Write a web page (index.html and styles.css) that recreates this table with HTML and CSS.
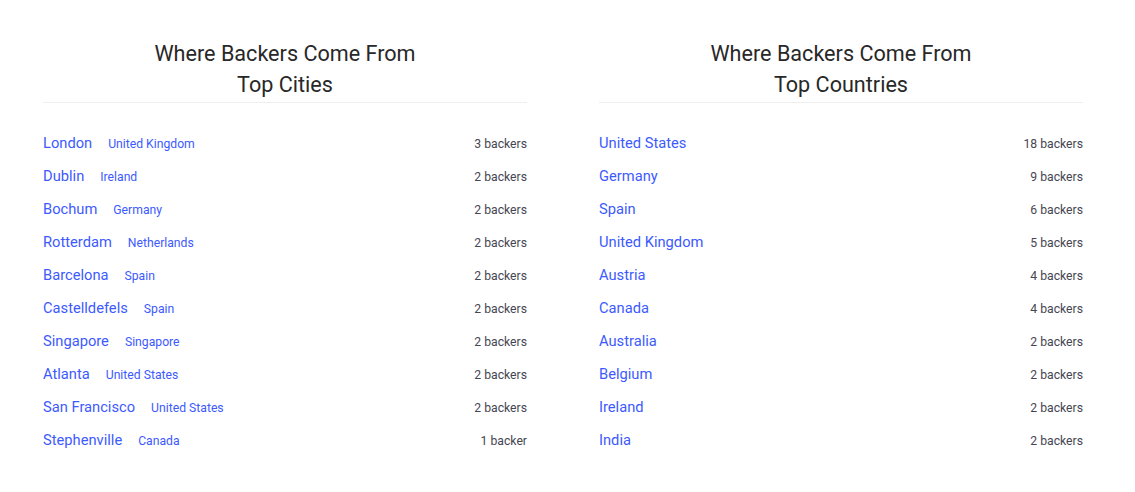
FILE: index.html
```html
<!DOCTYPE html>
<html>
<head>
<meta charset="utf-8">
<link rel="stylesheet" href="styles.css">
</head>
<body>
<div class="page">
  <section class="panel">
    <h2 class="title">Where Backers Come From<br>Top Cities</h2>
    <ul class="list">
      <li class="row"><span class="place"><a class="name">London</a><a class="sub">United Kingdom</a></span><span class="count">3 backers</span></li>
      <li class="row"><span class="place"><a class="name">Dublin</a><a class="sub">Ireland</a></span><span class="count">2 backers</span></li>
      <li class="row"><span class="place"><a class="name">Bochum</a><a class="sub">Germany</a></span><span class="count">2 backers</span></li>
      <li class="row"><span class="place"><a class="name">Rotterdam</a><a class="sub">Netherlands</a></span><span class="count">2 backers</span></li>
      <li class="row"><span class="place"><a class="name">Barcelona</a><a class="sub">Spain</a></span><span class="count">2 backers</span></li>
      <li class="row"><span class="place"><a class="name">Castelldefels</a><a class="sub">Spain</a></span><span class="count">2 backers</span></li>
      <li class="row"><span class="place"><a class="name">Singapore</a><a class="sub">Singapore</a></span><span class="count">2 backers</span></li>
      <li class="row"><span class="place"><a class="name">Atlanta</a><a class="sub">United States</a></span><span class="count">2 backers</span></li>
      <li class="row"><span class="place"><a class="name">San Francisco</a><a class="sub">United States</a></span><span class="count">2 backers</span></li>
      <li class="row"><span class="place"><a class="name">Stephenville</a><a class="sub">Canada</a></span><span class="count">1 backer</span></li>
    </ul>
  </section>
  <section class="panel">
    <h2 class="title">Where Backers Come From<br>Top Countries</h2>
    <ul class="list">
      <li class="row"><span class="place"><a class="name">United States</a></span><span class="count">18 backers</span></li>
      <li class="row"><span class="place"><a class="name">Germany</a></span><span class="count">9 backers</span></li>
      <li class="row"><span class="place"><a class="name">Spain</a></span><span class="count">6 backers</span></li>
      <li class="row"><span class="place"><a class="name">United Kingdom</a></span><span class="count">5 backers</span></li>
      <li class="row"><span class="place"><a class="name">Austria</a></span><span class="count">4 backers</span></li>
      <li class="row"><span class="place"><a class="name">Canada</a></span><span class="count">4 backers</span></li>
      <li class="row"><span class="place"><a class="name">Australia</a></span><span class="count">2 backers</span></li>
      <li class="row"><span class="place"><a class="name">Belgium</a></span><span class="count">2 backers</span></li>
      <li class="row"><span class="place"><a class="name">Ireland</a></span><span class="count">2 backers</span></li>
      <li class="row"><span class="place"><a class="name">India</a></span><span class="count">2 backers</span></li>
    </ul>
  </section>
</div>
</body>
</html>
```
FILE: styles.css
```css
html, body {
  margin: 0;
  padding: 0;
  background: #ffffff;
}
body {
  font-family: Roboto, "Noto Sans", sans-serif;
  color: #282828;
}
.page {
  display: grid;
  grid-template-columns: 484px 484px;
  column-gap: 72px;
  padding: 38px 0 0 43px;
}
.title {
  margin: 0;
  font-size: 21.6px;
  font-weight: 400;
  line-height: 31px;
  text-align: center;
  color: #282828;
  padding-bottom: 2px;
  border-bottom: 1px solid #eeeeee;
}
.list {
  list-style: none;
  margin: 0;
  padding: 31px 0 0;
}
.row {
  display: flex;
  justify-content: space-between;
  align-items: baseline;
  height: 33px;
}
.place {
  display: flex;
  align-items: baseline;
  gap: 16px;
}
.name {
  font-size: 14.7px;
  color: #3d5afe;
}
.sub {
  font-size: 12.2px;
  color: #3d5afe;
}
.count {
  font-size: 12.2px;
  color: #464652;
}
```
